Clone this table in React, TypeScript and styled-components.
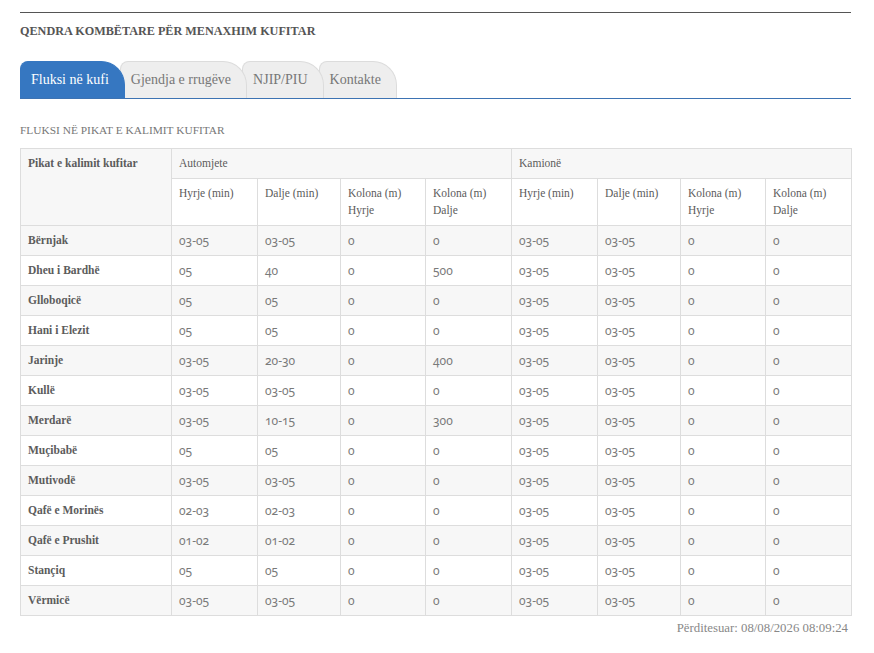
import styled, { createGlobalStyle } from "styled-components";

const GlobalStyle = createGlobalStyle`
  html, body {
    margin: 0;
    padding: 0;
    background: #fff;
  }
  body {
    font-family: "Liberation Serif", "DejaVu Serif", serif;
    color: #555;
  }
`;

const tabs = ["Fluksi në kufi", "Gjendja e rrugëve", "NJIP/PIU", "Kontakte"];

const widths = [151, 86, 83, 85, 86, 86, 83, 85, 86];

const rows: [string, string, string, string, string][] = [
  ["Bërnjak", "03-05", "03-05", "0", "0"],
  ["Dheu i Bardhë", "05", "40", "0", "500"],
  ["Glloboqicë", "05", "05", "0", "0"],
  ["Hani i Elezit", "05", "05", "0", "0"],
  ["Jarinje", "03-05", "20-30", "0", "400"],
  ["Kullë", "03-05", "03-05", "0", "0"],
  ["Merdarë", "03-05", "10-15", "0", "300"],
  ["Muçibabë", "05", "05", "0", "0"],
  ["Mutivodë", "03-05", "03-05", "0", "0"],
  ["Qafë e Morinës", "02-03", "02-03", "0", "0"],
  ["Qafë e Prushit", "01-02", "01-02", "0", "0"],
  ["Stançiq", "05", "05", "0", "0"],
  ["Vërmicë", "03-05", "03-05", "0", "0"],
];

const Page = styled.div`
  width: 831px;
  margin: 0 0 0 20px;
  padding-top: 12px;
`;

const TopRule = styled.div`
  border-top: 1px solid #555;
`;

const Title = styled.h1`
  margin: 0;
  padding: 9px 0 0;
  font-size: 12.2px;
  line-height: 18px;
  font-weight: bold;
  text-transform: uppercase;
  color: #555;
`;

const TabBar = styled.div`
  display: flex;
  margin-top: 21px;
  border-bottom: 1px solid #3d73b3;
  height: 37px;
`;

const Tab = styled.div<{ $active?: boolean; $z: number }>`
  position: relative;
  z-index: ${({ $z }) => $z};
  margin-left: -5px;
  &:first-child {
    margin-left: 0;
  }
  height: 37px;
  box-sizing: border-box;
  padding: 0 15px 0 10px;
  display: flex;
  align-items: center;
  font-size: 14px;
  border-radius: 8px 24px 0 0;
  background: ${({ $active }) => ($active ? "#3677c1" : "#eeeeee")};
  color: ${({ $active }) => ($active ? "#fff" : "#777")};
  border: 1px solid ${({ $active }) => ($active ? "#3677c1" : "#dcdcdc")};
  border-bottom: none;
`;

const Subtitle = styled.h2`
  margin: 22px 0 0;
  font-size: 11.4px;
  line-height: 18px;
  font-weight: normal;
  text-transform: uppercase;
  color: #777;
`;

const Table = styled.table`
  margin-top: 9px;
  width: 831px;
  table-layout: fixed;
  border-collapse: collapse;
  font-size: 11.5px;
  line-height: 17px;

  tr:nth-child(odd) {
    background: #f7f7f7;
  }
  tr:nth-child(even) {
    background: #fff;
  }
`;

const Cell = styled.td<{ $kind?: "label" | "head" | "data" }>`
  border: 1px solid #dddddd;
  padding: 6px 7px;
  vertical-align: ${({ $kind }) => ($kind === "data" ? "middle" : "top")};
  font-weight: ${({ $kind }) => ($kind === "label" ? "bold" : "normal")};
  color: ${({ $kind }) => ($kind === "data" ? "#7a7a7a" : "#5c5c5c")};
  font-family: ${({ $kind }) =>
    $kind === "data"
      ? `"Noto Sans", "Open Sans", sans-serif`
      : `"Liberation Serif", "DejaVu Serif", serif`};
  font-size: ${({ $kind }) => ($kind === "data" ? "12px" : "11.5px")};
  font-variant-numeric: oldstyle-nums;
`;

const Updated = styled.div`
  text-align: right;
  padding: 3px 3px 0 0;
  font-size: 12.8px;
  line-height: 18px;
  color: #888;
  font-variant-numeric: oldstyle-nums;
`;

const subHeads = ["Hyrje (min)", "Dalje (min)", "Kolona (m) Hyrje", "Kolona (m) Dalje"];

export default function App() {
  return (
    <Page>
      <GlobalStyle />
      <TopRule />
      <Title>Qendra Kombëtare për Menaxhim Kufitar</Title>
      <TabBar>
        {tabs.map((t, i) => (
          <Tab key={t} $active={i === 0} $z={10 - i}>
            {t}
          </Tab>
        ))}
      </TabBar>
      <Subtitle>Fluksi në pikat e kalimit kufitar</Subtitle>
      <Table>
        <colgroup>
          {widths.map((w, i) => (
            <col key={i} style={{ width: w }} />
          ))}
        </colgroup>
        <tbody>
          <tr>
            <Cell $kind="label" rowSpan={2}>
              Pikat e kalimit kufitar
            </Cell>
            <Cell $kind="head" colSpan={4}>
              Automjete
            </Cell>
            <Cell $kind="head" colSpan={4}>
              Kamionë
            </Cell>
          </tr>
          <tr>
            {[...subHeads, ...subHeads].map((h, i) => (
              <Cell $kind="head" key={i}>
                {h}
              </Cell>
            ))}
          </tr>
          {rows.map(([name, hy, da, kh, kd]) => (
            <tr key={name}>
              <Cell $kind="label">{name}</Cell>
              <Cell $kind="data">{hy}</Cell>
              <Cell $kind="data">{da}</Cell>
              <Cell $kind="data">{kh}</Cell>
              <Cell $kind="data">{kd}</Cell>
              <Cell $kind="data">03-05</Cell>
              <Cell $kind="data">03-05</Cell>
              <Cell $kind="data">0</Cell>
              <Cell $kind="data">0</Cell>
            </tr>
          ))}
        </tbody>
      </Table>
      <Updated>Përditesuar: 08/08/2026 08:09:24</Updated>
    </Page>
  );
}
